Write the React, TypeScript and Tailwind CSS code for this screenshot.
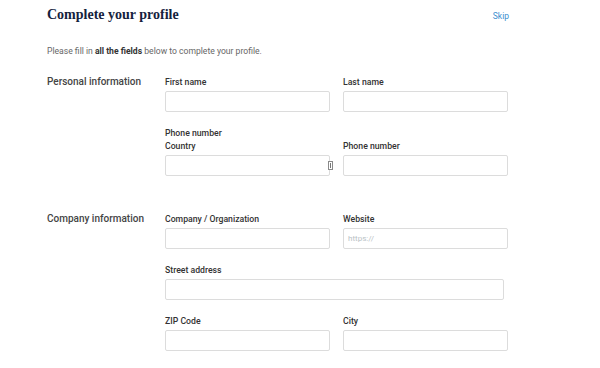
import React from 'react';

const sans = { fontFamily: 'Roboto, "Liberation Sans", sans-serif' };

const Field = ({ label, extra, placeholder, wide, select }: { label: string; extra?: string; placeholder?: string; wide?: boolean; select?: boolean }) => (
  <div className={wide ? 'col-span-2' : ''}>
    {extra && <div className="text-[8.7px] leading-[13px] font-medium text-[#333]">{extra}</div>}
    <div className="text-[8.7px] leading-[12px] font-medium text-[#333] mb-[3px]">{label}</div>
    <div className="relative">
      <div className={`h-[21px] border border-[#dcdcdc] rounded-[2px] bg-white flex items-center px-[4px] ${wide ? 'w-[339px]' : 'w-[165px]'}`}>
        {placeholder && <span className="text-[8px] text-[#b9c2c6]">{placeholder}</span>}
      </div>
      {select && (
        <span className="absolute right-[-3px] top-[6px] w-[5px] h-[9px] border border-[#8a8a8a] bg-white flex items-center justify-center">
          <span className="w-[1px] h-[5px] bg-[#777]" />
        </span>
      )}
    </div>
  </div>
);

export default function App() {
  return (
    <div className="w-[600px] h-[368px] bg-white overflow-hidden pt-[5px]" style={sans}>
      <div className="ml-[47px] w-[462px]">
        <div className="flex justify-between items-center h-[20px]">
          <h1 className="text-[14px] leading-[20px] font-bold text-[#14223d]" style={{ fontFamily: '"Liberation Serif", "DejaVu Serif", serif' }}>
            Complete your profile
          </h1>
          <a className="text-[8.5px] text-[#3d8fcf] mt-[2px]">Skip</a>
        </div>

        <p className="mt-[20px] text-[8.6px] leading-[12px] text-[#666]">
          Please fill in <b className="font-bold text-[#333]">all the fields</b> below to complete your profile.
        </p>

        {/* Personal information */}
        <div className="mt-[19px] flex">
          <div className="w-[118px] text-[10px] leading-[12px] font-medium text-[#444]">Personal information</div>
          <div className="grid grid-cols-[165px_165px] gap-x-[13px] gap-y-[15px] items-end">
            <Field label="First name" />
            <Field label="Last name" />
            <Field extra="Phone number" label="Country" select />
            <Field label="Phone number" />
          </div>
        </div>

        {/* Company information */}
        <div className="mt-[37px] flex">
          <div className="w-[118px] text-[10px] leading-[12px] font-medium text-[#444]">Company information</div>
          <div className="grid grid-cols-[165px_165px] gap-x-[13px] gap-y-[15px] items-end">
            <Field label="Company / Organization" />
            <Field label="Website" placeholder="https://" />
            <Field label="Street address" wide />
            <Field label="ZIP Code" />
            <Field label="City" />
          </div>
        </div>
      </div>
    </div>
  );
}
